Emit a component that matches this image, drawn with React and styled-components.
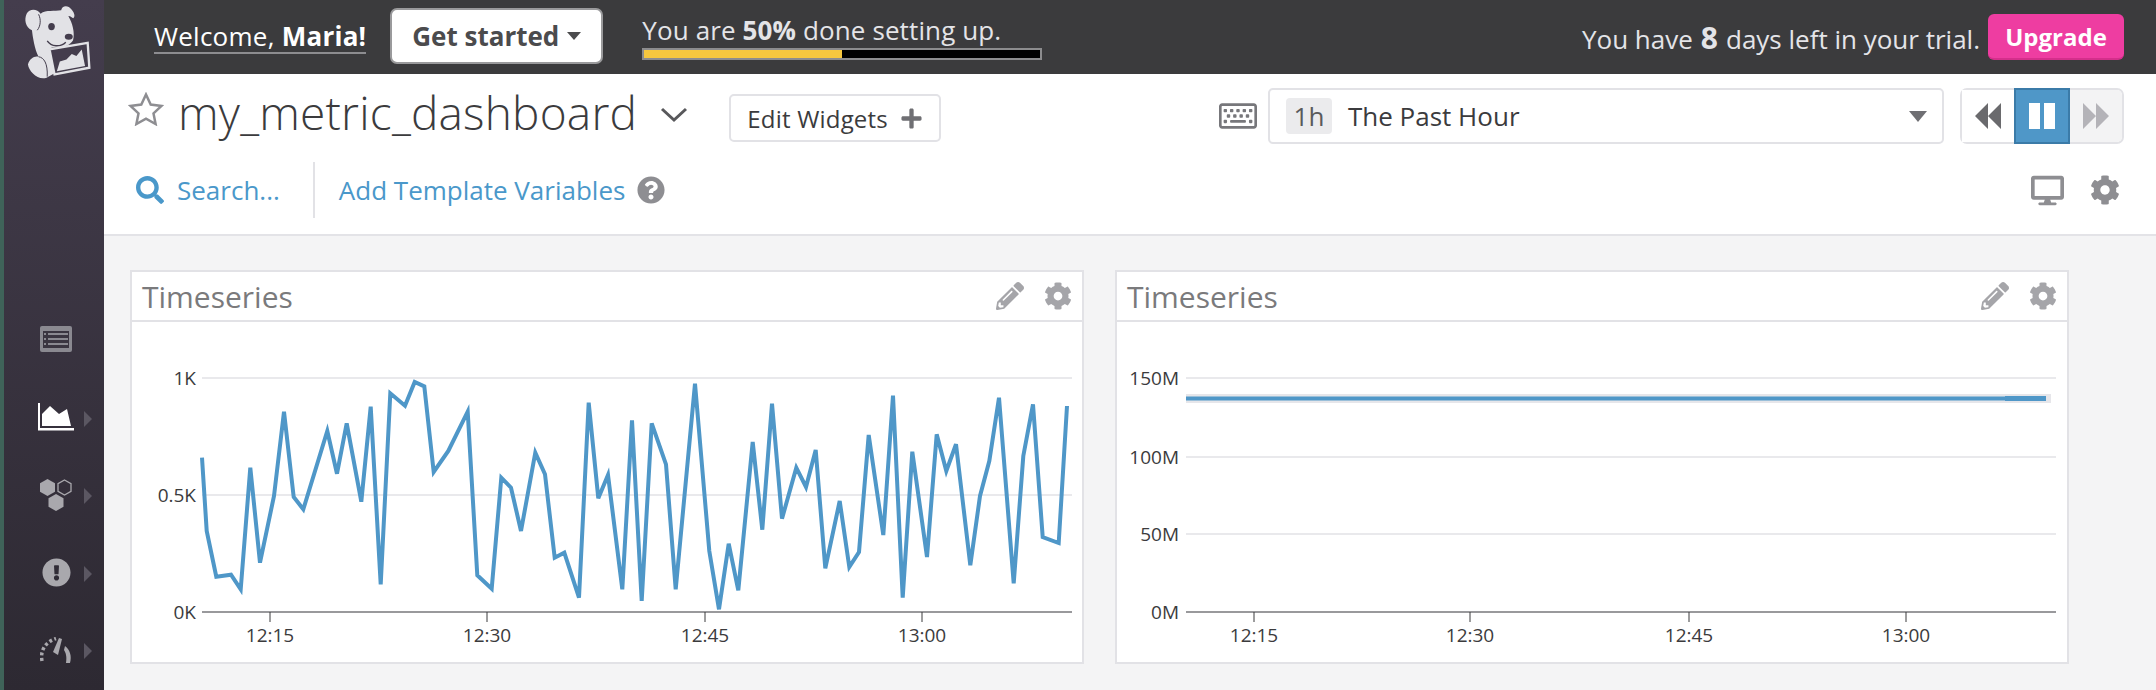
import styled, { createGlobalStyle } from "styled-components";
import {
  FaCog,
  FaDesktop,
  FaPlus,
  FaQuestionCircle,
  FaRegKeyboard,
  FaSearch,
  FaExclamationCircle,
  FaPencilAlt,
} from "react-icons/fa";

const FONT = `"Open Sans", "Noto Sans", sans-serif`;

const GlobalStyle = createGlobalStyle`
  html, body {
    margin: 0;
    height: 100%;
    overflow: hidden;
    background: #f4f4f5;
    font-family: ${FONT};
  }
`;

const Shell = styled.div`
  display: flex;
  width: 2156px;
  height: 690px;
`;

const Sidebar = styled.aside`
  flex: 0 0 100px;
  height: 690px;
  border-left: 4px solid #3f6359;
  background: linear-gradient(#443d4d, #2d2932);
  display: flex;
  flex-direction: column;
`;

const Logo = styled.div`
  height: 303px;
  padding: 3px 0 0 19px;
  box-sizing: border-box;
  svg {
    display: block;
  }
`;

const NavItem = styled.div`
  height: 78px;
  padding-left: 34px;
  display: flex;
  align-items: center;
  gap: 10px;
  color: ${(p) => (p.$active ? "#ffffff" : "#a9a8ad")};
  &:nth-of-type(2) {
    height: 80px;
  }
`;

const NavIcon = styled.div`
  width: 36px;
  display: flex;
  justify-content: center;
  margin-bottom: 3px;
`;

const NavCaret = styled.div`
  width: 0;
  height: 0;
  border-left: 8px solid #5b5762;
  border-top: 8px solid transparent;
  border-bottom: 8px solid transparent;
`;

const Main = styled.div`
  flex: 1;
  display: flex;
  flex-direction: column;
  min-width: 0;
`;

const TopBar = styled.header`
  height: 74px;
  background: #3b3b3d;
  display: flex;
  align-items: center;
  padding: 0 32px 0 50px;
  color: #e4e4e8;
`;

const Welcome = styled.span`
  font-size: 26px;
  color: #fff;
  border-bottom: 2px solid #8d8d90;
  line-height: 32px;
  letter-spacing: 0.25px;
  white-space: nowrap;
  b {
    font-weight: 700;
  }
`;

const GetStarted = styled.button`
  margin-left: 24px;
  flex: 0 0 213px;
  height: 56px;
  box-sizing: border-box;
  margin-bottom: 2px;
  background: #fff;
  border: 2px solid #9a9a9c;
  border-radius: 7px;
  font-family: ${FONT};
  font-size: 26px;
  font-weight: 700;
  color: #4b4b4d;
  display: flex;
  align-items: center;
  justify-content: center;
  gap: 8px;
  white-space: nowrap;
`;

const Caret = styled.span`
  display: block;
  width: 0;
  height: 0;
  border-top: ${(p) => p.$size * 0.62}px solid ${(p) => p.$color};
  border-left: ${(p) => p.$size / 2}px solid transparent;
  border-right: ${(p) => p.$size / 2}px solid transparent;
`;

const Setup = styled.div`
  margin-left: 39px;
  flex: 0 0 400px;
  margin-bottom: 2px;
`;

const SetupText = styled.div`
  font-size: 26px;
  line-height: 34px;
  letter-spacing: 0.12px;
  white-space: nowrap;
  b {
    font-weight: 700;
  }
`;

const Progress = styled.div`
  height: 12px;
  box-sizing: border-box;
  border: 2px solid #8c8c8e;
  background: #000;
  margin-top: 1px;
`;

const ProgressFill = styled.div`
  height: 100%;
  background: #f6c73f;
`;

const Trial = styled.div`
  margin-left: auto;
  font-size: 26px;
  white-space: nowrap;
  display: flex;
  align-items: baseline;
  gap: 8px;
  b {
    font-size: 30px;
    font-weight: 700;
  }
`;

const Upgrade = styled.button`
  margin-left: 8px;
  flex: 0 0 136px;
  height: 46px;
  background: #ee3da1;
  border: none;
  border-bottom: 2px solid #d42f8b;
  border-radius: 6px;
  color: #fff;
  font-family: ${FONT};
  font-size: 24px;
  font-weight: 700;
  padding: 0;
`;

const Header = styled.div`
  height: 160px;
  background: #fff;
  border-bottom: 2px solid #e3e3e7;
  display: flex;
  flex-direction: column;
`;

const TitleRow = styled.div`
  height: 80px;
  padding: 14px 32px 0 24px;
  box-sizing: border-box;
  display: flex;
  align-items: flex-start;
`;

const StarIcon = styled.svg`
  margin-top: 4px;
  flex: none;
`;

const Title = styled.h1`
  margin: -2px 0 0 14px;
  font-size: 46px;
  line-height: 52px;
  font-weight: 300;
  letter-spacing: 0.2px;
  color: #3b3b3d;
  white-space: nowrap;
`;

const ChevronIcon = styled.svg`
  margin: 19px 0 0 23px;
  flex: none;
`;

const EditButton = styled.button`
  margin: 6px 0 0 41px;
  flex: 0 0 212px;
  height: 48px;
  background: #fff;
  border: 2px solid #e2e2e6;
  border-radius: 5px;
  font-family: ${FONT};
  font-size: 24px;
  letter-spacing: 0.2px;
  color: #3b3b3d;
  display: flex;
  align-items: center;
  justify-content: center;
  gap: 12px;
  white-space: nowrap;
  padding: 0;
  svg {
    color: #6f6f73;
    font-size: 23px;
  }
`;

const TimeGroup = styled.div`
  margin-left: auto;
  display: flex;
  align-items: center;
`;

const KeyboardIcon = styled(FaRegKeyboard)`
  font-size: 38px;
  color: #77777b;
  margin-right: 11px;
`;

const TimeSelect = styled.div`
  width: 676px;
  height: 56px;
  box-sizing: border-box;
  border: 2px solid #e2e2e6;
  border-radius: 5px;
  display: flex;
  align-items: center;
  padding: 0 15px 0 16px;
`;

const Chip = styled.span`
  width: 46px;
  height: 36px;
  border-radius: 4px;
  background: #ebebed;
  color: #5a5a5c;
  font-size: 26px;
  display: flex;
  align-items: center;
  justify-content: center;
`;

const TimeLabel = styled.span`
  margin-left: 16px;
  font-size: 26px;
  color: #3b3b3d;
  flex: 1;
`;

const PlayGroup = styled.div`
  margin-left: 16px;
  width: 164px;
  height: 56px;
  box-sizing: border-box;
  border: 2px solid #e2e2e6;
  border-radius: 7px;
  display: flex;
`;

const PlayButton = styled.div`
  flex: ${(p) => (p.$active ? "0 0 56px" : "1")};
  margin: ${(p) => (p.$active ? "-2px 0" : "0")};
  box-sizing: border-box;
  display: flex;
  align-items: center;
  justify-content: center;
  background: ${(p) => (p.$active ? "#4f97c8" : p.$muted ? "#f3f3f4" : "#fff")};
  border: ${(p) => (p.$active ? "2px solid #3b7ba8" : "none")};
  color: ${(p) => (p.$active ? "#fff" : p.$muted ? "#b4b3b8" : "#6a6a6d")};
  border-radius: ${(p) => (p.$muted ? "0 5px 5px 0" : "0")};
`;

const ActionRow = styled.div`
  flex: 1;
  display: flex;
  align-items: center;
  padding: 0 36px 0 32px;
  margin-top: -8px;
`;

const LinkText = styled.span`
  font-size: 26px;
  color: #4a98ca;
  white-space: nowrap;
`;

const SearchIcon = styled(FaSearch)`
  font-size: 28px;
  color: #4a98ca;
  margin-right: 13px;
`;

const Divider = styled.div`
  width: 2px;
  height: 56px;
  background: #e2e2e6;
  margin: 0 24px 0 33px;
`;

const HelpIcon = styled(FaQuestionCircle)`
  font-size: 28px;
  color: #8e8e92;
  margin-left: 12px;
`;

const RowIcons = styled.div`
  margin-left: auto;
  display: flex;
  align-items: center;
  gap: 26px;
  color: #8e8e92;
  svg {
    display: block;
  }
`;

const Content = styled.main`
  flex: 1;
  background: #f4f4f5;
  padding: 34px 0 0 26px;
  display: flex;
  gap: 31px;
`;

const Widget = styled.section`
  flex: 0 0 954px;
  height: 394px;
  box-sizing: border-box;
  background: #fff;
  border: 2px solid #e2e2e6;
  display: flex;
  flex-direction: column;
`;

const WidgetHead = styled.div`
  height: 48px;
  border-bottom: 2px solid #e2e2e6;
  display: flex;
  align-items: center;
  padding: 0 10px;
`;

const WidgetTitle = styled.h2`
  margin: 0;
  font-size: 30px;
  font-weight: 400;
  color: #7a7a7c;
`;

const WidgetIcons = styled.div`
  margin-left: auto;
  display: flex;
  align-items: center;
  gap: 20px;
  color: #a5a5a9;
  font-size: 28px;
  svg {
    display: block;
  }
`;

const ChartSvg = styled.svg`
  display: block;
  flex: 1;
`;

const AxisText = styled.text`
  font-family: ${FONT};
  font-size: 19px;
  fill: #3b3b3d;
  text-anchor: ${(p) => p.$anchor};
`;

const firstPart = [
  [246, 590], [260, 810], [289, 947], [333, 941], [362, 985], [391, 620], [420, 905], [462, 705],
  [492, 452], [521, 708], [550, 745], [622, 510], [651, 638], [680, 487], [724, 722], [752, 437],
  [782, 970], [811, 397], [855, 434], [884, 363], [913, 376], [941, 633], [985, 570], [1043, 452],
  [1072, 943], [1115, 983], [1144, 650], [1173, 680], [1203, 810], [1246, 575], [1275, 640],
  [1304, 890], [1333, 875], [1377, 1010], [1406, 425], [1435, 712],
];

const secondPart = [
  [24, 642], [67, 985], [96, 478], [125, 1020], [155, 487], [198, 610], [227, 985], [285, 368],
  [328, 870], [357, 1045], [386, 848], [415, 988], [458, 543], [487, 806], [516, 428], [546, 773],
  [589, 620], [618, 678], [647, 567], [676, 922], [719, 720], [748, 918], [777, 873], [806, 522],
  [850, 822], [879, 404], [908, 1010], [937, 572], [981, 888], [1010, 520], [1039, 630],
  [1068, 550], [1111, 913], [1140, 705], [1168, 600], [1197, 410], [1241, 967], [1270, 585],
  [1299, 430], [1328, 828], [1376, 846], [1401, 435],
];

const seriesPoints = [
  ...firstPart.map(([x, y]) => [x / 3 - 12, y / 3 - 61]),
  ...secondPart.map(([x, y]) => [x / 3 + 468, y / 3 - 61]),
]
  .map(([x, y]) => `${x.toFixed(1)},${y.toFixed(1)}`)
  .join(" ");

function Chart({ left, right, grid, ticks, labelX, children }) {
  const base = grid[grid.length - 1].y;
  return (
    <ChartSvg width="950" height="342">
      {grid.map((g, i) => (
        <g key={g.label}>
          <line
            x1={left}
            x2={right}
            y1={g.y}
            y2={g.y}
            stroke={i === grid.length - 1 ? "#77777b" : "#e2e2e6"}
            strokeWidth="1.5"
          />
          <AxisText x={labelX} y={g.y + 7} $anchor="end">
            {g.label}
          </AxisText>
        </g>
      ))}
      {ticks.map((t) => (
        <g key={t.label}>
          <line x1={t.x} x2={t.x} y1={base} y2={base + 10} stroke="#3b3b3d" strokeWidth="1" />
          <AxisText x={t.x} y={base + 30} $anchor="middle">
            {t.label}
          </AxisText>
        </g>
      ))}
      {children}
    </ChartSvg>
  );
}

function Gauge() {
  return (
    <svg width="32" height="26" viewBox="0 0 32 26" fill="none">
      <path d="M2 24 C0 14 5 5 16 1.5" stroke="#a9a8ad" strokeWidth="3.5" strokeDasharray="3 2.5" />
      <path d="M19 1 L22 2 L18 18 L13 15 Z" fill="#a9a8ad" />
      <path d="M25 9 C30 13 32 19 30 26 L26 26 C27 20 26 16 24 13 Z" fill="#a9a8ad" />
    </svg>
  );
}

function DogLogo() {
  return (
    <svg width="68" height="78" viewBox="65 10 205 235">
      <path
        fill="#e2e2e6"
        d="M118 42 C135 30 160 36 180 32 C182 18 200 14 212 30 C222 42 222 52 216 56 C207 50 204 48 202 50 C214 70 222 100 216 122 C206 140 180 146 152 144 L144 150 L160 222 L136 235 C110 244 82 215 80 195 C84 178 100 168 112 172 C100 150 94 110 92 92 C72 84 68 58 76 42 C84 26 108 26 118 42 Z"
      />
      <path d="M112 44 C120 60 118 80 108 92" stroke="#443d4d" strokeWidth="3" fill="none" />
      <ellipse cx="151" cy="81" rx="10" ry="11" fill="#443d4d" />
      <ellipse cx="203" cy="112" rx="12" ry="9" fill="#443d4d" />
      <path d="M138 124 C150 142 178 144 194 128" stroke="#443d4d" strokeWidth="4" fill="none" />
      <path d="M112 172 C128 174 140 192 138 232" stroke="#443d4d" strokeWidth="3" fill="none" />
      <path d="M145 150 L260 130 L265 205 L160 225 Z" fill="#443d4d" stroke="#e2e2e6" strokeWidth="7" />
      <path d="M167 216 L176 186 L196 180 L212 164 L226 170 L242 150 L252 200 Z" fill="#e2e2e6" />
    </svg>
  );
}

const Rewind = () => (
  <svg width="26" height="26" viewBox="0 0 26 26" fill="currentColor">
    <path d="M13 0 V26 L0 13 Z M26 0 V26 L13 13 Z" />
  </svg>
);

const Pause = () => (
  <svg width="26" height="26" viewBox="0 0 26 26" fill="currentColor">
    <path d="M0 0 H11 V26 H0 Z M15 0 H26 V26 H15 Z" />
  </svg>
);

const Forward = () => (
  <svg width="26" height="26" viewBox="0 0 26 26" fill="currentColor">
    <path d="M0 0 V26 L13 13 Z M13 0 V26 L26 13 Z" />
  </svg>
);

export default function App() {
  return (
    <>
      <GlobalStyle />
      <Shell>
        <Sidebar>
          <Logo>
            <DogLogo />
          </Logo>
          <NavItem>
            <NavIcon>
              <svg width="32" height="26" viewBox="0 0 32 26">
                <rect width="32" height="26" rx="2" fill="#8a8990" />
                <rect x="3" y="5" width="26" height="17" fill="#3a3540" />
                <path d="M4 7h2v2H4zM4 12h2v2H4zM4 17h2v2H4zM8 7h20v2H8zM8 12h20v2H8zM8 17h20v2H8z" fill="#8a8990" />
              </svg>
            </NavIcon>
          </NavItem>
          <NavItem $active>
            <NavIcon>
              <svg width="36" height="28" viewBox="0 0 36 28" fill="#fff">
                <path d="M0 0h2v25h34v2.5H0z" />
                <path d="M4 23 V11 L12 3 L21 11 L29 6 L33 23 Z" />
              </svg>
            </NavIcon>
            <NavCaret />
          </NavItem>
          <NavItem>
            <NavIcon>
              <svg width="32" height="32" viewBox="0 0 32 32">
                <path d="M7.5 0 L15 4.2 V12.8 L7.5 17 L0 12.8 V4.2 Z" fill="#a9a8ad" />
                <path d="M24.5 1 L31 4.7 V12.3 L24.5 16 L18 12.3 V4.7 Z" fill="none" stroke="#a9a8ad" strokeWidth="1.3" />
                <path d="M16 15 L23.5 19.2 V27.8 L16 32 L8.500 27.8 V19.2 Z" fill="#a9a8ad" />
              </svg>
            </NavIcon>
            <NavCaret />
          </NavItem>
          <NavItem>
            <NavIcon>
              <FaExclamationCircle size={29} />
            </NavIcon>
            <NavCaret />
          </NavItem>
          <NavItem>
            <NavIcon>
              <Gauge />
            </NavIcon>
            <NavCaret />
          </NavItem>
        </Sidebar>
        <Main>
          <TopBar>
            <Welcome>
              Welcome, <b>Maria!</b>
            </Welcome>
            <GetStarted>
              Get started
              <Caret $size={14} $color="#4b4b4d" />
            </GetStarted>
            <Setup>
              <SetupText>
                You are <b>50%</b> done setting up.
              </SetupText>
              <Progress>
                <ProgressFill style={{ width: "50%" }} />
              </Progress>
            </Setup>
            <Trial>
              <span>You have</span>
              <b>8</b>
              <span>days left in your trial.</span>
            </Trial>
            <Upgrade>Upgrade</Upgrade>
          </TopBar>
          <Header>
            <TitleRow>
              <StarIcon width="36" height="34" viewBox="0 0 36 34" fill="none">
                <path
                  d="M18 2.500 L22.700 12.600 L33.500 13.900 L25.500 21.400 L27.600 32 L18 26.700 L8.400 32 L10.500 21.400 L2.500 13.900 L13.300 12.600 Z"
                  stroke="#8e8e92"
                  strokeWidth="2.500"
                />
              </StarIcon>
              <Title>my_metric_dashboard</Title>
              <ChevronIcon width="28" height="16" viewBox="0 0 28 16" fill="none">
                <path d="M2 2 L14 13 L26 2" stroke="#58585b" strokeWidth="3" />
              </ChevronIcon>
              <EditButton>
                Edit Widgets
                <FaPlus />
              </EditButton>
              <TimeGroup>
                <KeyboardIcon />
                <TimeSelect>
                  <Chip>1h</Chip>
                  <TimeLabel>The Past Hour</TimeLabel>
                  <Caret $size={18} $color="#6f6f73" />
                </TimeSelect>
                <PlayGroup>
                  <PlayButton>
                    <Rewind />
                  </PlayButton>
                  <PlayButton $active>
                    <Pause />
                  </PlayButton>
                  <PlayButton $muted>
                    <Forward />
                  </PlayButton>
                </PlayGroup>
              </TimeGroup>
            </TitleRow>
            <ActionRow>
              <SearchIcon />
              <LinkText>Search...</LinkText>
              <Divider />
              <LinkText>Add Template Variables</LinkText>
              <HelpIcon />
              <RowIcons>
                <FaDesktop size={33} />
                <FaCog size={30} />
              </RowIcons>
            </ActionRow>
          </Header>
          <Content>
            <Widget>
              <WidgetHead>
                <WidgetTitle>Timeseries</WidgetTitle>
                <WidgetIcons>
                  <FaPencilAlt />
                  <FaCog />
                </WidgetIcons>
              </WidgetHead>
              <Chart
                left={70}
                right={940}
                labelX={64}
                grid={[
                  { y: 56, label: "1K" },
                  { y: 173, label: "0.5K" },
                  { y: 290, label: "0K" },
                ]}
                ticks={[
                  { x: 138, label: "12:15" },
                  { x: 355, label: "12:30" },
                  { x: 573, label: "12:45" },
                  { x: 790, label: "13:00" },
                ]}
              >
                <polyline points={seriesPoints} fill="none" stroke="#4f97c8" strokeWidth="4" strokeLinejoin="miter" />
              </Chart>
            </Widget>
            <Widget>
              <WidgetHead>
                <WidgetTitle>Timeseries</WidgetTitle>
                <WidgetIcons>
                  <FaPencilAlt />
                  <FaCog />
                </WidgetIcons>
              </WidgetHead>
              <Chart
                left={69}
                right={939}
                labelX={62}
                grid={[
                  { y: 56, label: "150M" },
                  { y: 135, label: "100M" },
                  { y: 212, label: "50M" },
                  { y: 290, label: "0M" },
                ]}
                ticks={[
                  { x: 137, label: "12:15" },
                  { x: 353, label: "12:30" },
                  { x: 572, label: "12:45" },
                  { x: 789, label: "13:00" },
                ]}
              >
                <rect x="69" y="72" width="865" height="9" fill="#e6e6ea" />
                <line x1="69" x2="888" y1="76.500" y2="76.500" stroke="#4f97c8" strokeWidth="4" />
                <line x1="888" x2="929" y1="76.500" y2="76.500" stroke="#4f97c8" strokeWidth="5" />
              </Chart>
            </Widget>
          </Content>
        </Main>
      </Shell>
    </>
  );
}
